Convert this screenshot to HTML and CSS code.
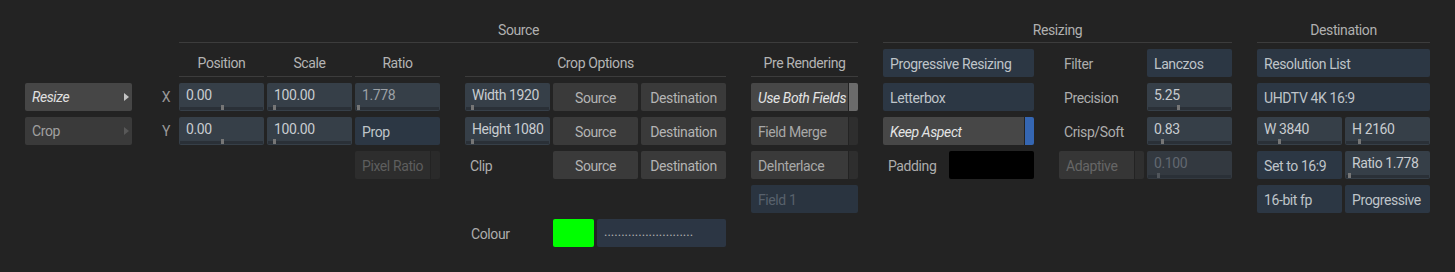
FILE: index.html
```html
<!DOCTYPE html>
<html lang="en">
<head>
    <meta charset="UTF-8">
    <meta name="viewport" content="width=device-width, initial-scale=1.0">
    <title>Resize</title>

    <link rel="stylesheet" href="styles.css">
</head>
<body>

    <div class="panel">

        <div class="nav">
            <div class="nav-btn active">Resize<span class="arrow"></span></div>
            <div class="nav-btn">Crop<span class="arrow"></span></div>
        </div>

        <div class="axis">
            <div class="axis-label">X</div>
            <div class="axis-label">Y</div>
        </div>

        <!-- Source -->
        <section class="section first">
            <div class="section-title">Source</div>
            <div class="section-body">

                <div class="group g3">
                    <div class="col-title">Position</div>
                    <div class="col-title">Scale</div>
                    <div class="col-title">Ratio</div>
                    <div class="num">0.00<i class="mark" style="left: 42px"></i></div>
                    <div class="num">100.00<i class="mark" style="left: 6px"></i></div>
                    <div class="num dim">1.778<i class="mark" style="left: 2px"></i></div>
                    <div class="num">0.00<i class="mark" style="left: 42px"></i></div>
                    <div class="num">100.00<i class="mark" style="left: 6px"></i></div>
                    <div class="menu">Prop</div>
                    <div class="toggle disabled col3"><span class="t-main">Pixel Ratio</span><span class="t-ind"></span></div>
                </div>

                <div class="group g3">
                    <div class="col-title span3">Crop Options</div>
                    <div class="num">Width 1920<i class="mark" style="left: 6px"></i></div>
                    <div class="btn">Source</div>
                    <div class="btn">Destination</div>
                    <div class="num">Height 1080<i class="mark" style="left: 6px"></i></div>
                    <div class="btn">Source</div>
                    <div class="btn">Destination</div>
                    <div class="label">Clip</div>
                    <div class="btn">Source</div>
                    <div class="btn">Destination</div>
                    <div class="label colour-label">Colour</div>
                    <div class="colour">
                        <span class="swatch"></span>
                        <span class="dots">..........................</span>
                    </div>
                </div>

                <div class="group g1">
                    <div class="col-title">Pre Rendering</div>
                    <div class="toggle on"><span class="t-main">Use Both Fields</span><span class="t-ind"></span></div>
                    <div class="toggle"><span class="t-main">Field Merge</span><span class="t-ind"></span></div>
                    <div class="toggle"><span class="t-main">DeInterlace</span><span class="t-ind"></span></div>
                    <div class="menu disabled">Field 1</div>
                </div>

            </div>
        </section>

        <!-- Resizing -->
        <section class="section">
            <div class="section-title">Resizing</div>
            <div class="section-body">

                <div class="group g-wide">
                    <div class="menu">Progressive Resizing</div>
                    <div class="menu">Letterbox</div>
                    <div class="toggle on blue"><span class="t-main">Keep Aspect</span><span class="t-ind"></span></div>
                    <div class="pad-row">
                        <span class="label">Padding</span>
                        <span class="black"></span>
                    </div>
                </div>

                <div class="group g2">
                    <div class="label">Filter</div>
                    <div class="menu">Lanczos</div>
                    <div class="label">Precision</div>
                    <div class="num">5.25<i class="mark" style="left: 30px"></i></div>
                    <div class="label">Crisp/Soft</div>
                    <div class="num">0.83<i class="mark" style="left: 14px"></i></div>
                    <div class="toggle disabled adaptive"><span class="t-main">Adaptive</span><span class="t-ind"></span></div>
                    <div class="num disabled">0.100<i class="mark" style="left: 10px"></i></div>
                </div>

            </div>
        </section>

        <!-- Destination -->
        <section class="section">
            <div class="section-title">Destination</div>
            <div class="section-body">
                <div class="group g2">
                    <div class="menu span2">Resolution List</div>
                    <div class="menu span2">UHDTV 4K 16:9</div>
                    <div class="num">W 3840<i class="mark" style="left: 21px"></i></div>
                    <div class="num">H 2160<i class="mark" style="left: 13px"></i></div>
                    <div class="menu">Set to 16:9</div>
                    <div class="num">Ratio 1.778<i class="mark" style="left: 3px"></i></div>
                    <div class="menu">16-bit fp</div>
                    <div class="menu">Progressive</div>
                </div>
            </div>
        </section>

    </div>

</body>
</html>
```

FILE: styles.css
```css
/* General */
html, body {
    margin: 0;
    padding: 0;
    background: #232323;
}

body {
    font-family: Roboto, "Liberation Sans", sans-serif;
    font-size: 14px;
    letter-spacing: -0.4px;
    color: #b4b4b4;
}

.panel {
    display: flex;
    align-items: flex-start;
    padding: 15px 0 0 25px;
}

/* Left navigation */
.nav {
    width: 107px;
    padding-top: 68px;
    display: flex;
    flex-direction: column;
    gap: 6px;
}

.nav-btn {
    height: 28px;
    box-sizing: border-box;
    display: flex;
    align-items: center;
    justify-content: space-between;
    padding: 0 3px 0 7px;
    border-radius: 2px;
    background: #3a3a3a;
    color: #a0a0a0;
}

.nav-btn.active {
    background: #464646;
    color: #e0e0e0;
    font-style: italic;
}

.arrow {
    width: 0;
    height: 0;
    border-left: 5px solid #585858;
    border-top: 4px solid transparent;
    border-bottom: 4px solid transparent;
}

.nav-btn.active .arrow {
    border-left-color: #c4c4c4;
}

.axis {
    width: 14px;
    margin: 0 6px 0 27px;
    padding-top: 68px;
    display: flex;
    flex-direction: column;
    gap: 6px;
}

.axis-label {
    height: 28px;
    line-height: 29px;
    text-align: center;
    color: #999;
}

/* Sections */
.section {
    margin-left: 25px;
}

.section.first {
    margin-left: 0;
}

.section-title {
    height: 28px;
    box-sizing: border-box;
    border-bottom: 1px solid #3c3c3c;
    line-height: 31px;
    text-align: center;
    color: #b0b0b0;
}

.section-body {
    display: flex;
    gap: 25px;
    margin-top: 6px;
}

.group {
    display: grid;
    grid-auto-rows: 28px;
    column-gap: 3px;
    row-gap: 6px;
}

.g1 { grid-template-columns: 107px; }
.g2 { grid-template-columns: repeat(2, 85px); }
.g3 { grid-template-columns: repeat(3, 85px); }
.g-wide { grid-template-columns: 151px; }

.span2 { grid-column: span 2; }
.span3 { grid-column: span 3; }
.col3 { grid-column: 3; }

.col-title {
    box-sizing: border-box;
    border-bottom: 1px solid #3c3c3c;
    line-height: 29px;
    text-align: center;
    color: #b4b4b4;
}

/* Controls */
.btn, .menu, .num, .label {
    box-sizing: border-box;
    display: flex;
    align-items: center;
    white-space: nowrap;
    border-radius: 2px;
}

.btn {
    justify-content: center;
    padding-top: 1px;
    background: #3a3a3a;
    color: #b4b4b4;
}

.menu {
    padding: 1px 0 0 7px;
    background: #2c3744;
    color: #bfc4c9;
}

.menu.disabled {
    background: #2a3440;
    color: #58616c;
}

.label {
    padding: 1px 0 0 5px;
    color: #adadad;
}

.num {
    position: relative;
    padding: 0 0 5px 7px;
    background: #363f48;
    color: #c8ccd0;
}

.num::after {
    content: "";
    position: absolute;
    left: 1px;
    right: 1px;
    bottom: 1px;
    height: 3px;
    background: #2a3037;
}

.num .mark {
    position: absolute;
    bottom: 1px;
    width: 3px;
    height: 5px;
    background: #767676;
    z-index: 1;
}

.num.dim {
    color: #9ca1a6;
}

.num.disabled {
    background: #333940;
    color: #626870;
}

.num.disabled .mark {
    background: #50555b;
}

/* Toggles with a state strip on the right */
.toggle {
    display: flex;
    gap: 1px;
}

.t-main {
    flex: 1;
    display: flex;
    align-items: center;
    padding: 1px 0 0 7px;
    white-space: nowrap;
    border-radius: 2px 0 0 2px;
    background: #3a3a3a;
    color: #a8a8a8;
}

.t-ind {
    width: 9px;
    border-radius: 0 2px 2px 0;
    background: #2e2e2e;
}

.toggle.on .t-main {
    background: #474747;
    color: #e4e4e4;
    font-style: italic;
}

.toggle.on .t-ind {
    background: #6b6b6b;
}

.toggle.on.blue .t-ind {
    background: #3566b2;
}

.toggle.disabled .t-main {
    background: #2d2d2d;
    color: #5e5e5e;
}

.toggle.disabled .t-ind {
    background: #2a2a2a;
}

.toggle.adaptive .t-main {
    background: #363636;
    color: #666;
}

.toggle.adaptive .t-ind {
    background: #2f2f2f;
}

/* Padding colour */
.pad-row {
    display: flex;
    align-items: stretch;
    justify-content: space-between;
}

.black {
    width: 85px;
    border-radius: 2px;
    background: #000;
}

/* Colour picker row */
.colour-label {
    grid-row: 6;
    grid-column: 1;
    padding-left: 6px;
}

.colour {
    grid-row: 6;
    grid-column: 2 / 4;
    display: flex;
    gap: 3px;
}

.swatch {
    width: 41px;
    border-radius: 2px;
    background: #00ff00;
}

.dots {
    flex: 1;
    display: flex;
    align-items: center;
    padding: 0 0 4px 7px;
    border-radius: 2px;
    background: #2c3644;
    color: #b0b0b0;
    font-size: 13px;
    letter-spacing: 0;
}
```
